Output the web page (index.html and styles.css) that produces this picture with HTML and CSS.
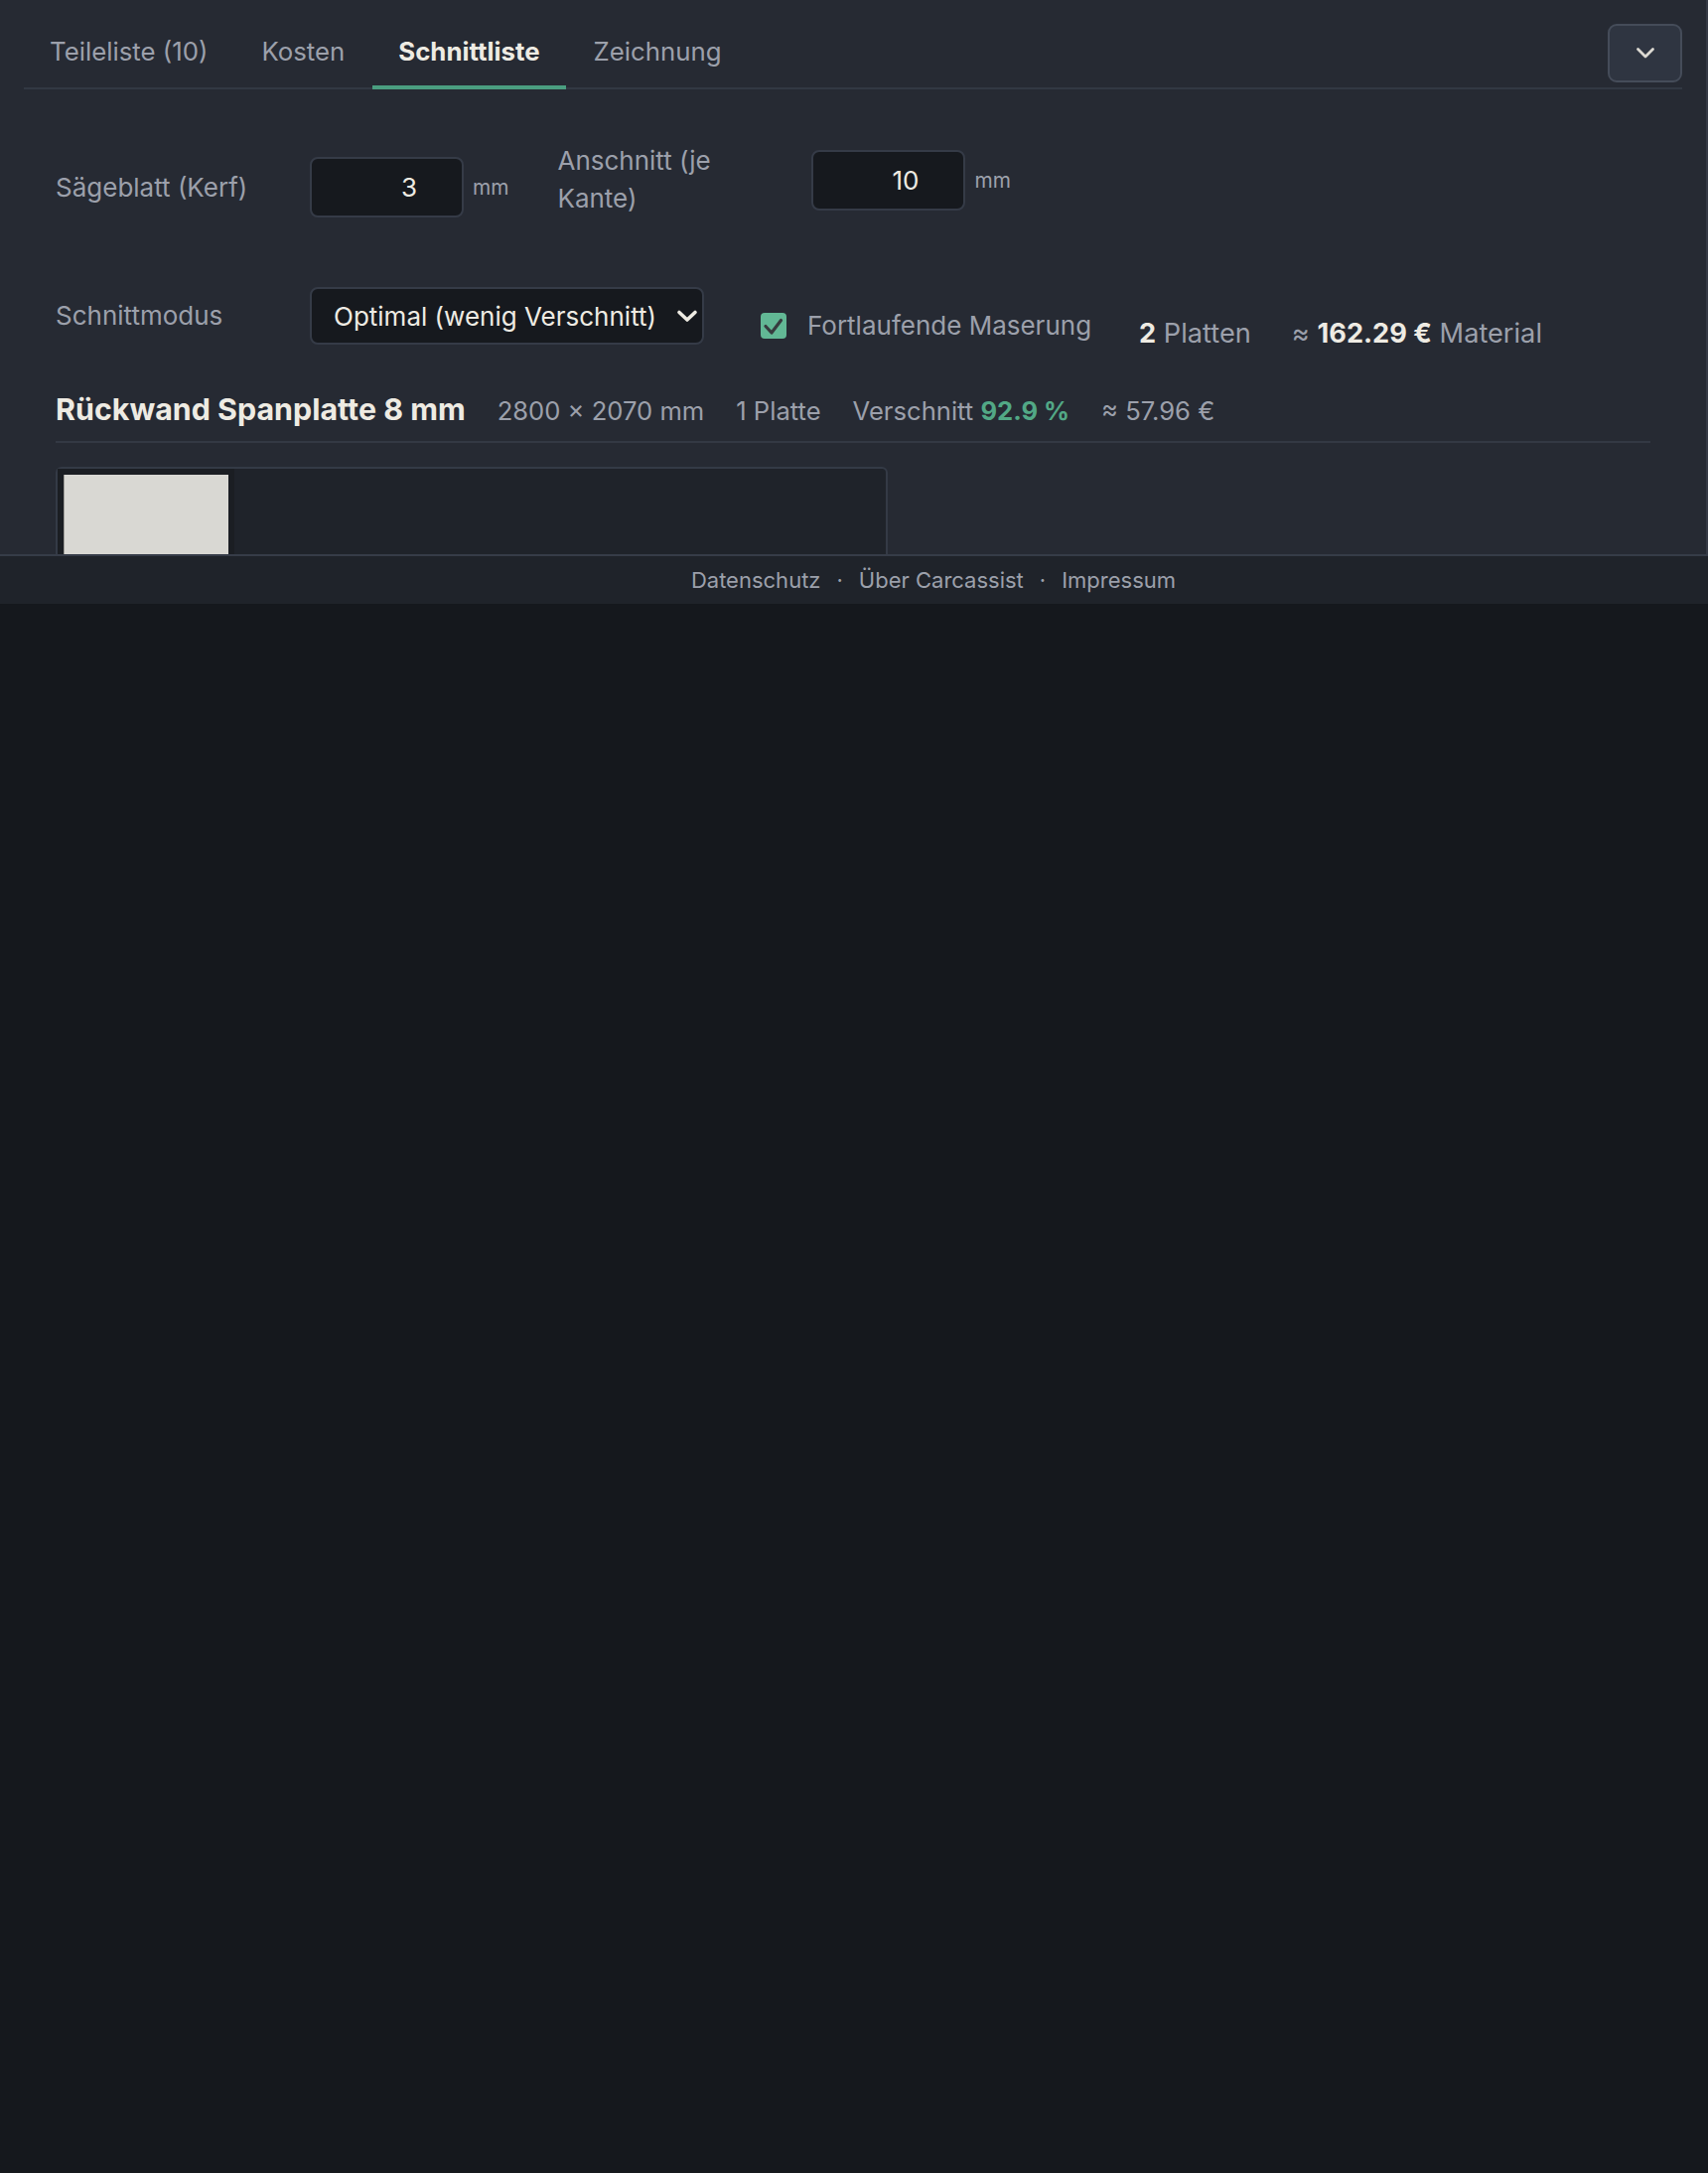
FILE: index.html
```html
<!DOCTYPE html>
<html lang="de">
<head>
    <meta charset="UTF-8">
    <meta name="viewport" content="width=device-width, initial-scale=1.0">
    <title>Carcassist - Schnittliste</title>
    <link rel="stylesheet" href="styles.css">
</head>
<body>

<div class="panel">
    <div class="tabs">
        <nav class="tab-list">
            <a class="tab" href="#teile">Teileliste (10)</a>
            <a class="tab" href="#kosten">Kosten</a>
            <a class="tab active" href="#schnitt">Schnittliste</a>
            <a class="tab" href="#zeichnung">Zeichnung</a>
        </nav>
        <button class="collapse-btn" type="button" aria-label="Einklappen">
            <svg width="20" height="13" viewBox="0 0 20 13" fill="none" stroke="currentColor" stroke-width="2.8" stroke-linecap="round" stroke-linejoin="round"><path d="M2.5 2.5l7.5 7.5 7.5-7.5"/></svg>
        </button>
    </div>

    <div class="content">
        <div class="field-row">
            <div class="field">
                <label class="field-label" for="kerf">Sägeblatt (Kerf)</label>
                <input class="num-input" id="kerf" type="text" value="3">
                <span class="unit">mm</span>
            </div>
            <div class="field">
                <label class="field-label" for="trim">Anschnitt (je Kante)</label>
                <input class="num-input" id="trim" type="text" value="10">
                <span class="unit">mm</span>
            </div>
        </div>

        <div class="field-row mode-row">
            <div class="field">
                <label class="field-label" for="mode">Schnittmodus</label>
                <div class="select-wrap">
                    <select id="mode" class="select">
                        <option>Optimal (wenig Verschnitt)</option>
                        <option>Schnell</option>
                    </select>
                    <svg class="select-arrow" width="22" height="15" viewBox="0 0 22 15" fill="none" stroke="currentColor" stroke-width="3.6" stroke-linecap="round" stroke-linejoin="round"><path d="M3 3.5l8 7.5 8-7.5"/></svg>
                </div>
            </div>
            <label class="check">
                <span class="check-box">
                    <svg width="26" height="26" viewBox="0 0 26 26" fill="none" stroke="currentColor" stroke-width="3.2" stroke-linecap="round" stroke-linejoin="round"><path d="M5 13.5l6 6.5 9.5-12.5"/></svg>
                </span>
                Fortlaufende Maserung
            </label>
            <div class="stats">
                <span><b>2</b> Platten</span>
                <span>≈ <b>162.29 €</b> Material</span>
            </div>
        </div>

        <div class="sheet-head">
            <h3>Rückwand Spanplatte 8 mm</h3>
            <span>2800 × 2070 mm</span>
            <span>1 Platte</span>
            <span>Verschnitt <b class="waste">92.9 %</b></span>
            <span>≈ 57.96 €</span>
        </div>

        <div class="sheet-view">
            <div class="sheet">
                <div class="piece"></div>
            </div>
        </div>
    </div>
</div>

<footer>
    <a href="#datenschutz">Datenschutz</a>
    <span class="sep">·</span>
    <a href="#about">Über Carcassist</a>
    <span class="sep">·</span>
    <a href="#impressum">Impressum</a>
</footer>

</body>
</html>
```

FILE: styles.css
```css
body {
    margin: 0;
    font-family: 'Inter', 'Noto Sans', sans-serif;
    color: #9ca0ab;
    background-color: #15181d;
}

.panel {
    height: 558px;
    overflow: hidden;
    padding: 0 24px;
    background-color: #262a33;
    border-right: 2px solid #353a45;
}

.tabs {
    display: flex;
    justify-content: space-between;
    border-bottom: 2px solid #323843;
}

.tab-list {
    display: flex;
    gap: 2px;
}

.tab {
    display: block;
    box-sizing: border-box;
    height: 90px;
    padding: 34px 26px 0;
    margin-bottom: -2px;
    font-size: 25.8px;
    line-height: 36px;
    color: #9ca0ab;
    text-decoration: none;
    border-bottom: 4px solid transparent;
}

.tab.active {
    color: #eeebe3;
    font-weight: 700;
    border-bottom-color: #4a9e80;
}

.collapse-btn {
    width: 75px;
    height: 59px;
    margin-top: 24px;
    display: flex;
    align-items: center;
    justify-content: center;
    color: #dcd9d2;
    background-color: #2f3541;
    border: 2px solid #454c59;
    border-radius: 9px;
    cursor: pointer;
}

.content {
    padding: 53px 32px 0;
}

.field-row {
    display: flex;
    align-items: flex-end;
    gap: 49px;
}

.field {
    display: flex;
    align-items: center;
}

.field-label {
    width: 210px;
    margin-right: 46px;
    font-size: 26px;
    line-height: 38px;
}

.num-input {
    width: 155px;
    height: 61px;
    box-sizing: border-box;
    padding: 0 45px 0 10px;
    font-family: inherit;
    font-size: 26px;
    text-align: right;
    color: #eeebe3;
    background-color: #16191e;
    border: 2px solid #353b47;
    border-radius: 8px;
}

.unit {
    margin-left: 9px;
    font-size: 20.8px;
}

.mode-row {
    margin-top: 70px;
    gap: 0;
}

.select-wrap {
    position: relative;
}

.select {
    width: 397px;
    height: 58px;
    padding: 0 40px 0 22px;
    font-family: inherit;
    font-size: 26px;
    color: #eeebe3;
    background-color: #16191e;
    border: 2px solid #353b47;
    border-radius: 8px;
    appearance: none;
}

.select-arrow {
    position: absolute;
    right: 6px;
    top: 22px;
    color: #eeebe3;
    pointer-events: none;
}

.check {
    display: flex;
    align-items: center;
    gap: 21px;
    margin-left: 57px;
    font-size: 26px;
    line-height: 38px;
}

.check-box {
    width: 26px;
    height: 26px;
    display: flex;
    color: #373c3f;
    background-color: #62b895;
    border-radius: 4px;
}

.stats {
    display: flex;
    gap: 41px;
    margin-left: 48px;
    font-size: 27.2px;
    line-height: 22px;
}

.stats b {
    color: #eeebe3;
}

.sheet-head {
    display: flex;
    align-items: baseline;
    gap: 32px;
    margin-top: 46px;
    padding-bottom: 13px;
    font-size: 25.6px;
    border-bottom: 2px solid #333944;
}

.sheet-head h3 {
    margin: 0;
    font-size: 30.4px;
    line-height: 38px;
    color: #eeebe3;
}

.waste {
    color: #52a886;
}

.sheet-view {
    width: 838px;
    height: 300px;
    margin-top: 24px;
    box-sizing: border-box;
    background-color: #1f232a;
    border: 2px solid #343a46;
    border-radius: 6px;
}

.sheet {
    width: 178px;
    height: 100%;
    box-sizing: border-box;
    padding: 6px 6px 0;
    background-color: #1b1e23;
}

.piece {
    height: 100%;
    background-color: #d9d8d3;
    border-left: 1px solid #9d9c98;
}

footer {
    display: flex;
    justify-content: center;
    align-items: center;
    height: 48px;
    padding-left: 160px;
    font-size: 22px;
    background-color: #1f232a;
    border-top: 2px solid #363c48;
}

footer a {
    color: #9ca0ab;
    text-decoration: none;
}

.sep {
    margin: 0 16px;
}
```
